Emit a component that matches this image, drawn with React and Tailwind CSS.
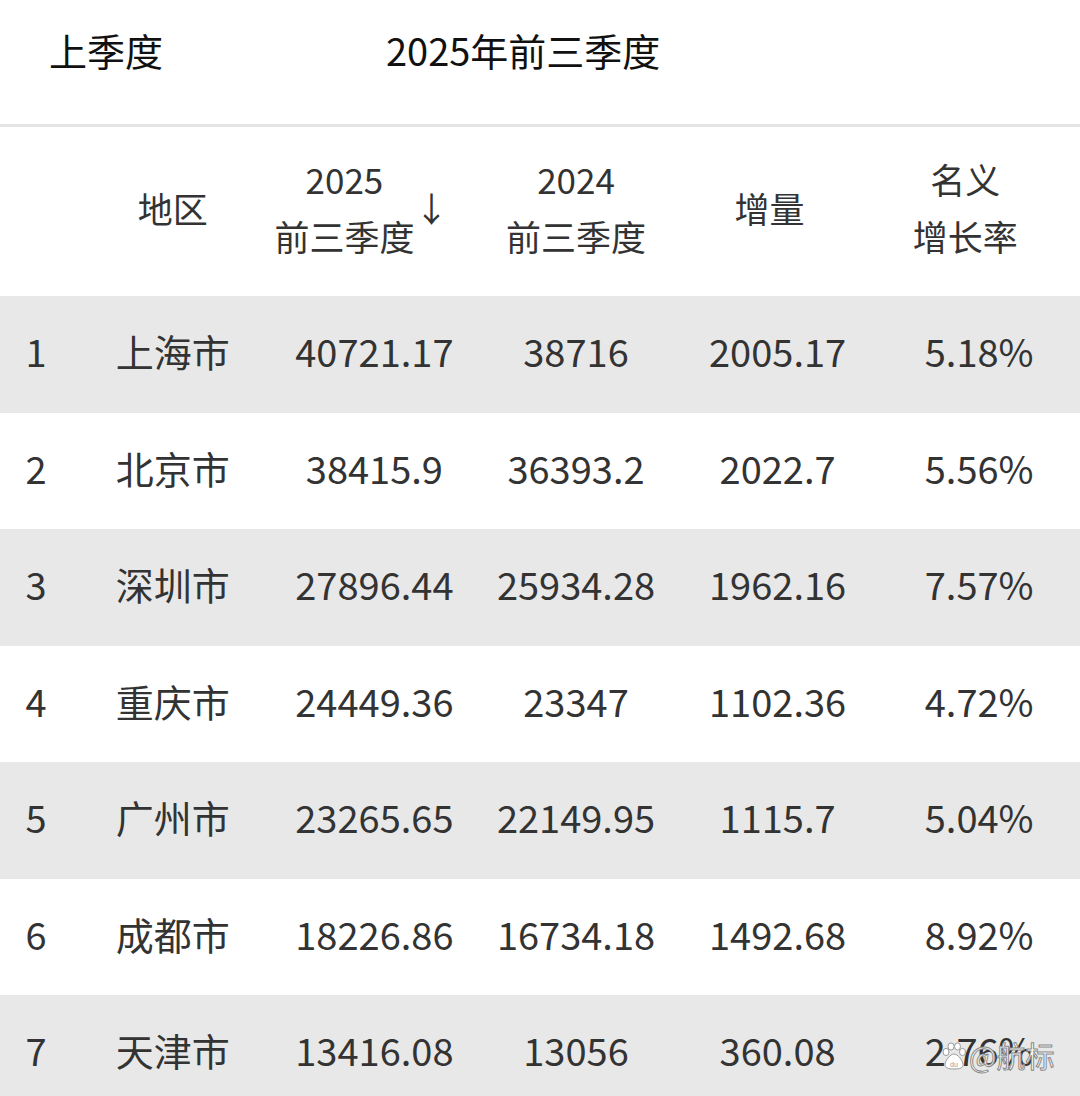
const rows = [
  ['1', '上海市', '40721.17', '38716', '2005.17', '5.18%'],
  ['2', '北京市', '38415.9', '36393.2', '2022.7', '5.56%'],
  ['3', '深圳市', '27896.44', '25934.28', '1962.16', '7.57%'],
  ['4', '重庆市', '24449.36', '23347', '1102.36', '4.72%'],
  ['5', '广州市', '23265.65', '22149.95', '1115.7', '5.04%'],
  ['6', '成都市', '18226.86', '16734.18', '1492.68', '8.92%'],
  ['7', '天津市', '13416.08', '13056', '360.08', '2.76%'],
];

function PawIcon() {
  return (
    <svg width="26" height="28" viewBox="0 0 26 28" fill="white" stroke="#9a9a9a" strokeWidth="1">
      <ellipse cx="5" cy="10" rx="3" ry="3.6" />
      <ellipse cx="10" cy="4.5" rx="3" ry="3.6" />
      <ellipse cx="16.5" cy="4.5" rx="3" ry="3.6" />
      <ellipse cx="21.5" cy="10" rx="3" ry="3.6" />
      <path d="M13 12c-4 0-9 7-9 10.5C4 26 7 27 13 27s9-1 9-4.5C22 19 17 12 13 12z" />
      <text x="13" y="24.5" fontSize="7" fill="#9a9a9a" stroke="none" textAnchor="middle" fontFamily="Liberation Sans, sans-serif">du</text>
    </svg>
  );
}

export default function App() {
  return (
    <div
      className="relative h-[1096px] w-[1080px] overflow-hidden bg-white"
      style={{ fontFamily: '"Noto Sans CJK SC", "Noto Sans", sans-serif' }}
    >
      {/* tabs */}
      <div className="flex h-[124px] items-center pb-[26px] text-[38px] text-[#111]">
        <div className="ml-[49px] w-[337px]">上季度</div>
        <div>2025年前三季度</div>
      </div>
      <div className="h-[3px] bg-[#e4e4e4]" />

      {/* header */}
      <div className="grid h-[169px] grid-cols-[72px_repeat(5,1fr)] items-center whitespace-nowrap pb-[9px] text-[35px] leading-[57px] text-[#333]">
        <div />
        <div className="text-center">地区</div>
        <div className="flex items-center justify-center">
          <div className="text-center">
            <div>2025</div>
            <div>前三季度</div>
          </div>
          <span className="mr-[26px] text-[34px]">↓</span>
        </div>
        <div className="text-center">
          <div>2024</div>
          <div>前三季度</div>
        </div>
        <div className="pr-[16px] text-center">增量</div>
        <div className="pr-[28px] text-center">
          <div>名义</div>
          <div>增长率</div>
        </div>
      </div>

      {/* rows */}
      {rows.map((r, i) => (
        <div
          key={r[0]}
          className={`grid h-[116.5px] grid-cols-[72px_repeat(5,1fr)] items-center pb-[7px] text-[38px] text-[#333] ${
            i % 2 === 0 ? 'bg-[#e8e8e8]' : 'bg-white'
          }`}
        >
          {r.map((c, j) => (
            <div key={j} className="text-center">
              {c}
            </div>
          ))}
        </div>
      ))}

      {/* watermark */}
      <div className="absolute left-[941px] top-[1041px] flex items-center gap-[2px]">
        <PawIcon />
        <span
          className="text-[29px] leading-none text-white"
          style={{ WebkitTextStroke: '1px #8a8a8a' }}
        >
          @航标
        </span>
      </div>
    </div>
  );
}
